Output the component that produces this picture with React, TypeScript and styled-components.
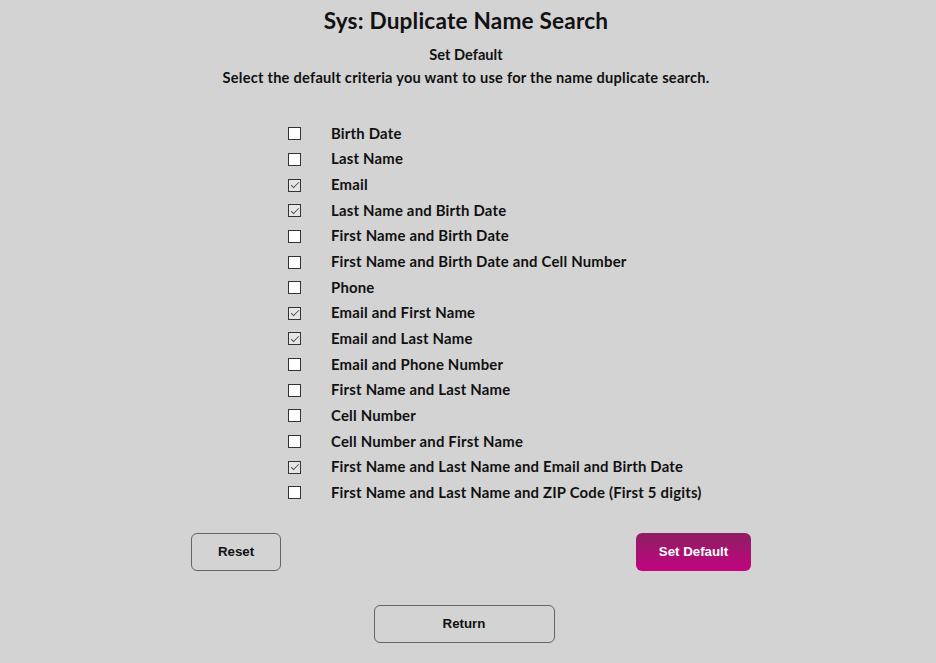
import React, { useState } from "react";
import styled, { createGlobalStyle } from "styled-components";

const Global = createGlobalStyle`
  html, body { margin: 0; padding: 0; background: #d3d3d3; }
  body { font-family: "Lato", "Noto Sans", sans-serif; color: #111; }
`;

const Page = styled.div`
  width: 936px;
  height: 663px;
  display: flex;
  flex-direction: column;
  align-items: center;
  box-sizing: border-box;
  padding-top: 6px;
  padding-right: 4px;
`;

const Title = styled.h1`
  margin: 0;
  font-size: 22.6px;
  font-weight: 700;
  line-height: 30px;
  letter-spacing: 0.2px;
  color: #111;
`;

const SubTitle = styled.div`
  margin-top: 10px;
  font-size: 14.6px;
  font-weight: 700;
  line-height: 18px;
`;

const Description = styled.div`
  margin-top: 5px;
  font-size: 14.6px;
  font-weight: 700;
  line-height: 18px;
  letter-spacing: 0.25px;
`;

const List = styled.div`
  align-self: flex-start;
  margin-left: 288px;
  margin-top: 33px;
  display: grid;
  grid-template-columns: 13px auto;
  column-gap: 30px;
  grid-auto-rows: 25.65px;
  align-items: center;
`;

const Box = styled.input`
  appearance: none;
  margin: 2px 0 0;
  width: 13px;
  height: 13px;
  box-sizing: border-box;
  border: 1px solid #333;
  background: #fff;
  display: grid;
  place-items: center;
  &:checked {
    background: #e6e6e6;
  }
  &:checked::after {
    content: "";
    width: 7px;
    height: 3px;
    border-left: 1.4px solid #555;
    border-bottom: 1.4px solid #555;
    transform: translate(0, -1px) rotate(-45deg);
  }
`;

const Label = styled.label`
  font-size: 14.9px;
  font-weight: 700;
  line-height: 18px;
  letter-spacing: 0.2px;
  white-space: nowrap;
`;

const ButtonRow = styled.div`
  align-self: flex-start;
  margin-left: 191px;
  width: 560px;
  margin-top: 28px;
  display: flex;
  justify-content: space-between;
`;

const Button = styled.button<{ $w: number; $primary?: boolean }>`
  width: ${(p) => p.$w}px;
  height: 38px;
  border-radius: 6px;
  box-sizing: border-box;
  font-family: "Liberation Sans", Arial, sans-serif;
  font-size: 13.3px;
  font-weight: 700;
  cursor: pointer;
  border: ${(p) => (p.$primary ? "none" : "1px solid #666")};
  color: ${(p) => (p.$primary ? "#fff" : "#111")};
  background: ${(p) =>
    p.$primary ? "linear-gradient(#8d1f63, #c2037f)" : "transparent"};
`;

const ReturnRow = styled.div`
  margin-top: 34px;
  margin-right: 4px;
`;

const items: [string, boolean][] = [
  ["Birth Date", false],
  ["Last Name", false],
  ["Email", true],
  ["Last Name and Birth Date", true],
  ["First Name and Birth Date", false],
  ["First Name and Birth Date and Cell Number", false],
  ["Phone", false],
  ["Email and First Name", true],
  ["Email and Last Name", true],
  ["Email and Phone Number", false],
  ["First Name and Last Name", false],
  ["Cell Number", false],
  ["Cell Number and First Name", false],
  ["First Name and Last Name and Email and Birth Date", true],
  ["First Name and Last Name and ZIP Code (First 5 digits)", false],
];

export default function App() {
  const [checked, setChecked] = useState(items.map((i) => i[1]));
  return (
    <>
      <Global />
      <Page>
        <Title>Sys: Duplicate Name Search</Title>
        <SubTitle>Set Default</SubTitle>
        <Description>
          Select the default criteria you want to use for the name duplicate search.
        </Description>
        <List>
          {items.map(([label], i) => (
            <React.Fragment key={label}>
              <Box
                type="checkbox"
                id={`c${i}`}
                checked={checked[i]}
                onChange={() =>
                  setChecked((c) => c.map((v, j) => (j === i ? !v : v)))
                }
              />
              <Label htmlFor={`c${i}`}>{label}</Label>
            </React.Fragment>
          ))}
        </List>
        <ButtonRow>
          <Button $w={90}>Reset</Button>
          <Button $w={115} $primary>
            Set Default
          </Button>
        </ButtonRow>
        <ReturnRow>
          <Button $w={181}>Return</Button>
        </ReturnRow>
      </Page>
    </>
  );
}
